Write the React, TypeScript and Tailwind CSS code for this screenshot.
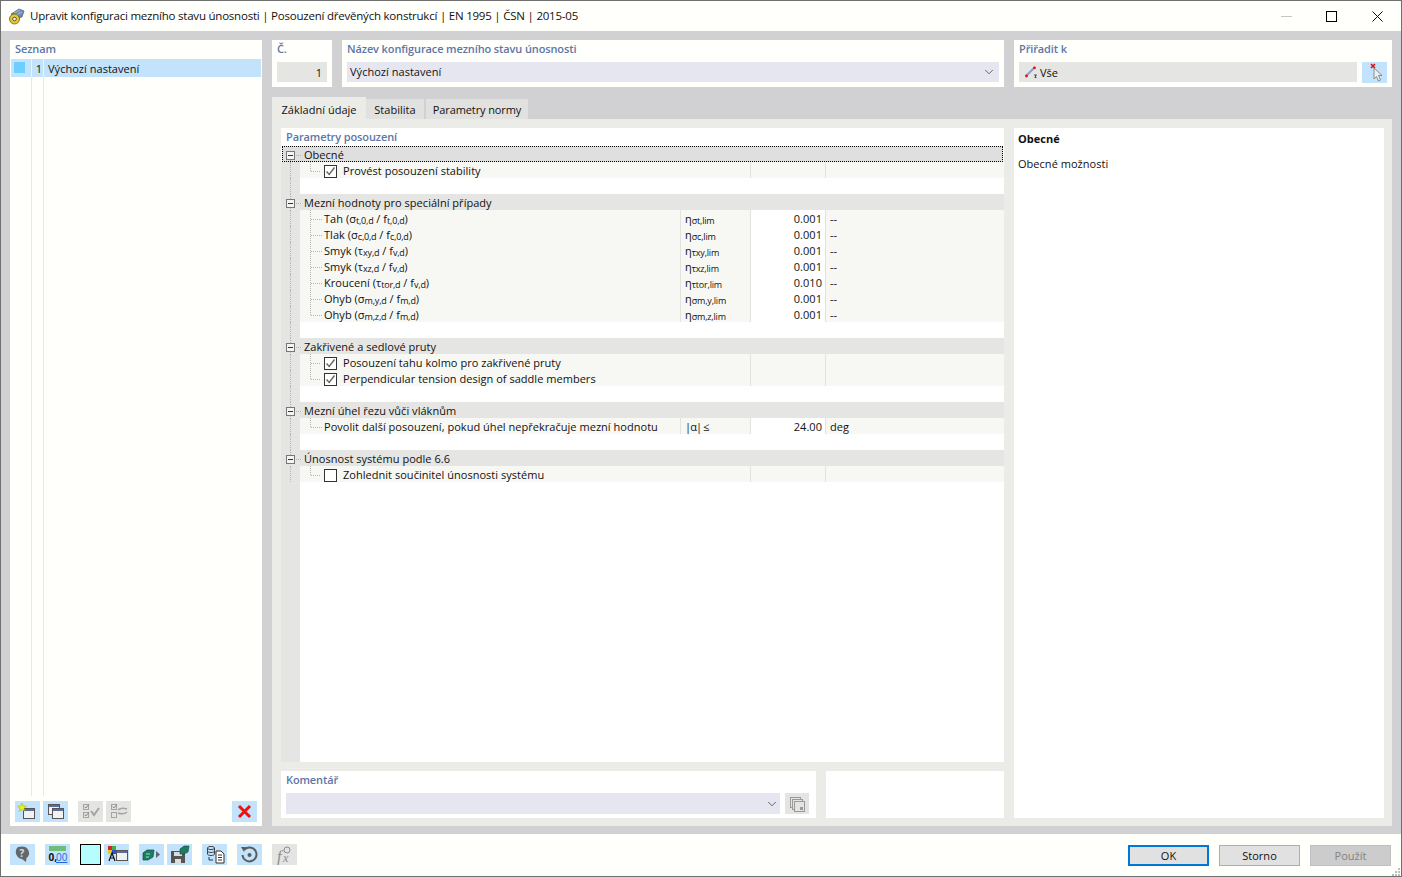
import type { ReactNode } from 'react';
import { ChevronDown } from 'lucide-react';

const ui = "font-['Open_Sans',sans-serif]";

function Sub({ children }: { children: ReactNode }) {
  return <sub className="text-[9px] tracking-[-0.2px] bottom-[-1px]">{children}</sub>;
}

function Formula({ name, a, b }: { name: string; a: ReactNode; b: string }) {
  return (
    <span>
      {name} ({a} / f<Sub>{b}</Sub>)
    </span>
  );
}

function Eta({ s }: { s: string }) {
  return (
    <span>
      η<Sub>{s}</Sub>
    </span>
  );
}

function Checkbox({ checked }: { checked: boolean }) {
  return (
    <span className="w-[13px] h-[13px] border border-[#333] bg-white flex items-center justify-center shrink-0">
      {checked && (
        <svg width="11" height="11" viewBox="0 0 11 11">
          <path d="M1.5 5.5 L4.2 8.5 L9.5 1.5" fill="none" stroke="#666" strokeWidth="1.4" />
        </svg>
      )}
    </span>
  );
}

function GutterLine({ show = true }: { show?: boolean }) {
  return (
    <div className="w-[19px] shrink-0 self-stretch bg-[#e5e5e3] pl-[9px]">
      {show && <div className="h-full border-l border-dotted border-[#b4b4b4]" />}
    </div>
  );
}

function Header({ title, focused, last }: { title: string; focused?: boolean; last?: boolean }) {
  return (
    <div
      className={
        'h-4 pt-[2px] flex items-center relative ' +
        (focused ? 'ml-px mr-px bg-[#dfdfdf] outline-1 outline-dotted outline-black -outline-offset-1' : 'bg-[#e5e5e3]')
      }
    >
      <svg width="23" height="16" viewBox="0 0 23 16" className={'shrink-0 overflow-visible ' + (focused ? '-ml-px' : '')}>
        <path d="M9.5 -1V4" stroke="#b4b4b4" strokeDasharray="1 1" opacity={focused ? 0 : 1} />
        <path d="M9.5 13V15" stroke="#b4b4b4" strokeDasharray="1 1" opacity={last ? 0 : 1} />
        <rect x="5.5" y="4.5" width="8" height="8" fill="#f4f4f2" stroke="#777" />
        <path d="M7 8.5H12" stroke="#333" />
        <path d="M15 8.5H21" stroke="#b4b4b4" strokeDasharray="1 1" />
      </svg>
      <span>{title}</span>
    </div>
  );
}

function Connector({ lastChild, lineWidth = 11 }: { lastChild?: boolean; lineWidth?: number }) {
  return (
    <svg width="23" height="16" viewBox="0 0 23 16" className="shrink-0 overflow-visible">
      <path d={lastChild ? 'M10.5 -1V8' : 'M10.5 -1V15'} stroke="#b4b4b4" strokeDasharray="1 1" />
      <path d={`M11 8.5H${11 + lineWidth}`} stroke="#b4b4b4" strokeDasharray="1 1" />
    </svg>
  );
}

function CheckRow({ label, checked, lastChild }: { label: string; checked: boolean; lastChild?: boolean }) {
  return (
    <div className="h-4 flex">
      <GutterLine />
      <div className="flex-1 flex bg-[#f7f8f3]">
        <div className="w-[450px] pt-[2px] flex items-center">
          <Connector lastChild={lastChild} lineWidth={10} />
          <span className="ml-[1px]">
            <Checkbox checked={checked} />
          </span>
          <span className="ml-[6px]">{label}</span>
        </div>
        <div className="w-[75px] border-l border-[#e2e2df]" />
        <div className="flex-1 border-l border-[#e2e2df]" />
      </div>
    </div>
  );
}

function ValueRow({
  label,
  symbol,
  value,
  unit,
  lastChild,
}: {
  label: ReactNode;
  symbol: ReactNode;
  value: string;
  unit: string;
  lastChild?: boolean;
}) {
  return (
    <div className="h-4 flex">
      <GutterLine />
      <div className="flex-1 flex bg-[#f7f8f3]">
        <div className="w-[380px] pt-[2px] flex items-center whitespace-nowrap">
          <Connector lastChild={lastChild} />
          <span className="ml-[1px]">{label}</span>
        </div>
        <div className="w-[70px] pt-[2px] border-l border-[#e2e2df] pl-[4px] flex items-center">{symbol}</div>
        <div className="w-[75px] pt-[2px] border-l border-[#e2e2df] bg-white pr-[3px] flex items-center justify-end">{value}</div>
        <div className="flex-1 pt-[2px] border-l border-[#e2e2df] pl-[4px] flex items-center">{unit}</div>
      </div>
    </div>
  );
}

function BlankRow({ line = true }: { line?: boolean }) {
  return (
    <div className="h-4 flex">
      <GutterLine show={line} />
      <div className="flex-1 bg-white" />
    </div>
  );
}

function Label({ children }: { children: ReactNode }) {
  return <div className="text-[#5d76a6] font-semibold leading-[18px] tracking-[-0.12px]">{children}</div>;
}

function IconButton({ children, disabled }: { children: ReactNode; disabled?: boolean }) {
  return (
    <button
      type="button"
      className={'w-[25px] h-[21px] flex items-center justify-center shrink-0 ' + (disabled ? 'bg-[#e4e4e2]' : 'bg-[#c2e3fb]')}
    >
      {children}
    </button>
  );
}

function Icon({ children }: { children: ReactNode }) {
  return (
    <svg width="25" height="21" viewBox="0 0 25 21">
      {children}
    </svg>
  );
}

function Win({ x, y }: { x: number; y: number }) {
  return (
    <g>
      <rect x={x + 0.5} y={y + 0.5} width="11" height="10" fill="#f2f2f2" stroke="#555" />
      <rect x={x + 1} y={y + 1} width="10" height="2" fill="#5a6f9f" />
    </g>
  );
}

function DialogButton({ children, variant }: { children: string; variant: 'ok' | 'plain' | 'off' }) {
  const cls =
    variant === 'ok'
      ? 'border-2 border-[#0078d7] bg-[#e1e1e1]'
      : variant === 'plain'
        ? 'border border-[#adadad] bg-[#e1e1e1]'
        : 'border border-[#bfbfbf] bg-[#cccccc] text-[#838383]';
  return (
    <button type="button" className={'w-[81px] h-[21px] pt-px flex items-center justify-center ' + cls}>
      {children}
    </button>
  );
}

export default function App() {
  return (
    <div className={'w-[1402px] h-[877px] flex flex-col border border-[#6f6f6f] bg-[#fffffc] text-[11px] text-[#111] tracking-[0.03px] overflow-hidden ' + ui}>
      <div className="h-[30px] shrink-0 flex items-center pl-[7px]">
        <svg width="17" height="17" viewBox="0 0 17 17" className="shrink-0">
          <path d="M3 6 L11 1 L16 3 L14 9 L8 11 Z" fill="#6f8db5" stroke="#3a4a5e" strokeWidth="0.6" />
          <path d="M6 5 L12 2 M8 7 L14 4" stroke="#c9d6e6" strokeWidth="0.7" />
          <circle cx="6.5" cy="11" r="5" fill="#e6c830" stroke="#6b5a10" strokeWidth="0.8" />
          <circle cx="6.5" cy="11" r="1.8" fill="#fff" stroke="#333" strokeWidth="0.8" />
        </svg>
        <span className="ml-[5px] text-[11.5px] tracking-[-0.22px]">
          Upravit konfiguraci mezního stavu únosnosti | Posouzení dřevěných konstrukcí | EN 1995 | ČSN | 2015-05
        </span>
        <div className="ml-auto flex items-center pr-[18px]">
          <div className="w-[11px] h-px bg-[#c4c4c4]" />
          <div className="ml-[34px] w-[11px] h-[11px] border border-black" />
          <svg width="11" height="11" viewBox="0 0 11 11" className="ml-[35px]">
            <path d="M0.5 0.5L10.5 10.5M10.5 0.5L0.5 10.5" stroke="#111" />
          </svg>
        </div>
      </div>

      <div className="flex-1 min-h-0 bg-[#d1d1d4] flex gap-[10px] pl-[9px] pr-[9px] pt-[9px] pb-[8px]">
        <div className="w-[252px] shrink-0 bg-[#fffffc] flex flex-col px-px pb-px">
          <div className="pl-[4px] h-[19px]">
            <Label>Seznam</Label>
          </div>
          <div className="h-[18px] bg-[#c2e3fb] flex items-center">
            <div className="w-[21px] h-full border-r border-[#eef3f5] pl-[3px] flex items-start pt-[3px]">
              <div className="w-[11px] h-[11px] bg-[#6dcfff]" />
            </div>
            <div className="w-[12px] h-full pt-[2px] border-r border-[#eef3f5] flex items-center justify-end pr-[1px]">1</div>
            <span className="pl-[4px] pt-[2px]">Výchozí nastavení</span>
          </div>
          <div className="flex-1 flex min-h-0">
            <div className="w-[21px] border-r border-[#e8e8e6]" />
            <div className="w-[12px] border-r border-[#e8e8e6]" />
          </div>
          <div className="h-[29px] flex items-start pl-[4px] pt-[5px] gap-[3px] bg-[#fffffc]">
            <IconButton>
              <Icon>
                <Win x={8} y={7} />
                <path d="M7 2 L8.2 5 L11.5 5.2 L9 7.2 L9.8 10.3 L7 8.6 L4.2 10.3 L5 7.2 L2.5 5.2 L5.8 5 Z" fill="#e8f020" stroke="#8a9a10" strokeWidth="0.4" />
              </Icon>
            </IconButton>
            <IconButton>
              <Icon>
                <Win x={5} y={3} />
                <Win x={9} y={7} />
              </Icon>
            </IconButton>
            <div className="ml-[7px] flex gap-[3px]">
              <IconButton disabled>
                <Icon>
                  <rect x="5.5" y="3.5" width="5" height="5" fill="none" stroke="#a4a4a4" />
                  <rect x="5.5" y="11.5" width="5" height="5" fill="none" stroke="#a4a4a4" />
                  <path d="M6.5 5.5l1.5 1.5 3-4M6.5 13.5l1.5 1.5 3-4" fill="none" stroke="#8c8c8c" />
                  <path d="M13 10l3 4 5-7" fill="none" stroke="#a4a4a4" strokeWidth="2" />
                </Icon>
              </IconButton>
              <IconButton disabled>
                <Icon>
                  <rect x="5.5" y="3.5" width="5" height="5" fill="none" stroke="#a4a4a4" />
                  <rect x="5.5" y="11.5" width="5" height="5" fill="none" stroke="#a4a4a4" />
                  <path d="M6.5 5.5l1.5 1.5 3-4" fill="none" stroke="#8c8c8c" />
                  <path d="M12 9c3-3 6-2 9-1M12 12c3 1 6 2 9-1" fill="none" stroke="#a4a4a4" strokeWidth="1.4" />
                </Icon>
              </IconButton>
            </div>
            <div className="ml-auto mr-[4px]">
              <IconButton>
                <Icon>
                  <path d="M7 5L18 16M18 5L7 16" stroke="#f01010" strokeWidth="3" />
                </Icon>
              </IconButton>
            </div>
          </div>
        </div>

        <div className="flex-1 min-w-0 flex flex-col">
          <div className="h-[47px] shrink-0 flex gap-[10px]">
            <div className="w-[60px] bg-[#fffffc] px-[5px]">
              <Label>Č.</Label>
              <div className="mt-[4px] h-[20px] pt-[2px] bg-[#e5e5e3] flex items-center justify-end pr-[5px]">1</div>
            </div>
            <div className="w-[662px] bg-[#fffffc] px-[5px]">
              <Label>Název konfigurace mezního stavu únosnosti</Label>
              <div className="mt-[4px] h-[20px] bg-[#e6e6f1] flex items-center justify-between pl-[3px] pr-[3px]">
                <span>Výchozí nastavení</span>
                <ChevronDown size={14} strokeWidth={1.25} className="text-[#333]" />
              </div>
            </div>
            <div className="flex-1 bg-[#fffffc] px-[5px]">
              <Label>Přiřadit k</Label>
              <div className="mt-[4px] flex gap-[5px]">
                <div className="flex-1 h-[20px] bg-[#e5e5e3] flex items-center pl-[6px] gap-[3px]">
                  <svg width="12" height="12" viewBox="0 0 12 12" className="shrink-0">
                    <path d="M1.5 9.5L9 2" stroke="#8aa0c8" strokeWidth="2" />
                    <circle cx="1.5" cy="10" r="1.4" fill="#e01010" />
                    <circle cx="9.5" cy="1.8" r="1.4" fill="#e01010" />
                    <path d="M9 9h3M10.5 9v3M9 12h3" stroke="#333" strokeWidth="0.8" />
                  </svg>
                  <span className="pt-[2px]">Vše</span>
                </div>
                <IconButton>
                  <svg width="25" height="21" viewBox="0 0 25 21">
                    <path d="M9 2L13 6M13 2L9 6" stroke="#e01010" strokeWidth="1.6" />
                    <path d="M12 6V17L14.5 14.5L16.5 19L18.5 18L16.5 13.5H20Z" fill="#efefef" stroke="#777" strokeWidth="0.8" />
                  </svg>
                </IconButton>
              </div>
            </div>
          </div>

          <div className="mt-[10px] h-[22px] shrink-0 flex items-end">
            <div className="w-[94px] h-[22px] pt-[4px] bg-[#ebebe8] flex items-center justify-center">Základní údaje</div>
            <div className="w-[58px] h-[20px] pt-[2px] bg-[#e1e1e0] flex items-center justify-center">Stabilita</div>
            <div className="w-[102px] h-[20px] pt-[2px] ml-[2px] bg-[#e1e1e0] flex items-center justify-center tracking-[-0.1px]">Parametry normy</div>
          </div>

          <div className="flex-1 min-h-0 bg-[#ebebe8] flex gap-[10px] pl-[9px] pr-[8px] pt-[9px] pb-[8px]">
            <div className="w-[723px] shrink-0 flex flex-col gap-[9px]">
              <div className="flex-1 min-h-0 bg-white flex flex-col">
                <div className="h-[18px] shrink-0 pl-[5px]">
                  <Label>Parametry posouzení</Label>
                </div>
                <Header title="Obecné" focused />
                <CheckRow label="Provést posouzení stability" checked lastChild />
                <BlankRow />
                <Header title="Mezní hodnoty pro speciální případy" />
                <ValueRow label={<Formula name="Tah" a={<>σ<Sub>t,0,d</Sub></>} b="t,0,d" />} symbol={<Eta s="σt,lim" />} value="0.001" unit="--" />
                <ValueRow label={<Formula name="Tlak" a={<>σ<Sub>c,0,d</Sub></>} b="c,0,d" />} symbol={<Eta s="σc,lim" />} value="0.001" unit="--" />
                <ValueRow label={<Formula name="Smyk" a={<>τ<Sub>xy,d</Sub></>} b="v,d" />} symbol={<Eta s="τxy,lim" />} value="0.001" unit="--" />
                <ValueRow label={<Formula name="Smyk" a={<>τ<Sub>xz,d</Sub></>} b="v,d" />} symbol={<Eta s="τxz,lim" />} value="0.001" unit="--" />
                <ValueRow label={<Formula name="Kroucení" a={<>τ<Sub>tor,d</Sub></>} b="v,d" />} symbol={<Eta s="τtor,lim" />} value="0.010" unit="--" />
                <ValueRow label={<Formula name="Ohyb" a={<>σ<Sub>m,y,d</Sub></>} b="m,d" />} symbol={<Eta s="σm,y,lim" />} value="0.001" unit="--" />
                <ValueRow label={<Formula name="Ohyb" a={<>σ<Sub>m,z,d</Sub></>} b="m,d" />} symbol={<Eta s="σm,z,lim" />} value="0.001" unit="--" lastChild />
                <BlankRow />
                <Header title="Zakřivené a sedlové pruty" />
                <CheckRow label="Posouzení tahu kolmo pro zakřivené pruty" checked />
                <CheckRow label="Perpendicular tension design of saddle members" checked lastChild />
                <BlankRow />
                <Header title="Mezní úhel řezu vůči vláknům" />
                <ValueRow
                  label="Povolit další posouzení, pokud úhel nepřekračuje mezní hodnotu"
                  symbol={<span className="tracking-[-0.9px]">|α| ≤</span>}
                  value="24.00"
                  unit="deg"
                  lastChild
                />
                <BlankRow />
                <Header title="Únosnost systému podle 6.6" last />
                <CheckRow label="Zohlednit součinitel únosnosti systému" checked={false} lastChild />
                <div className="flex-1 min-h-0 flex">
                  <GutterLine show={false} />
                </div>
              </div>

              <div className="h-[47px] shrink-0 flex gap-[10px]">
                <div className="w-[535px] bg-white px-[5px]">
                  <Label>Komentář</Label>
                  <div className="mt-[4px] flex gap-[5px]">
                    <div className="w-[494px] h-[21px] bg-[#e6e6f1] flex items-center justify-end pr-[1px]">
                      <ChevronDown size={14} strokeWidth={1.25} className="text-[#333]" />
                    </div>
                    <div className="w-[24px] h-[21px] bg-[#e4e4e2] flex items-center justify-center">
                      <svg width="16" height="16" viewBox="0 0 16 16">
                        <rect x="1.5" y="1.5" width="10" height="10" fill="none" stroke="#9a9a9a" />
                        <rect x="3.5" y="3.5" width="10" height="10" fill="#e4e4e2" stroke="#9a9a9a" />
                        <rect x="5.5" y="5.5" width="10" height="10" fill="#e4e4e2" stroke="#9a9a9a" />
                        <rect x="11" y="11" width="3" height="3" fill="#9a9a9a" />
                      </svg>
                    </div>
                  </div>
                </div>
                <div className="flex-1 bg-white" />
              </div>
            </div>

            <div className="flex-1 bg-white pl-[4px] pt-[2px]">
              <div className="font-bold leading-[18px]">Obecné</div>
              <div className="mt-[7px] leading-[18px]">Obecné možnosti</div>
            </div>
          </div>
        </div>
      </div>

      <div className="h-[42px] shrink-0 flex items-start pt-[10px] pl-[9px] pr-[10px] relative">
        <IconButton>
          <Icon>
            <path d="M12.5 3a7 6.5 0 0 1 4.5 11.5l-.5 4-4-3a7 7 0 0 1-4-12z" fill="#666" transform="translate(-0.5,-0.5)" />
            <text x="12" y="13" textAnchor="middle" fontSize="10" fontWeight="700" fill="#c2e3fb">?</text>
          </Icon>
        </IconButton>
        <div className="ml-[10px]">
          <IconButton>
            <Icon>
              <rect x="4" y="2" width="17" height="5" fill="#6ebd78" />
              <text x="3.5" y="17" fontSize="10" fontWeight="700" fill="#111">0,</text>
              <text x="11" y="17" fontSize="10" fill="#2266dd" textDecoration="underline">00</text>
            </Icon>
          </IconButton>
        </div>
        <div className="ml-[10px] w-[21px] h-[21px] border border-black bg-[#b5fdfe]" />
        <div className="ml-[3px]">
          <IconButton>
            <Icon>
              <rect x="4" y="2" width="4" height="4" fill="#e02020" />
              <rect x="8" y="2" width="4" height="4" fill="#40b040" />
              <rect x="4" y="6" width="4" height="4" fill="#e0d020" />
              <rect x="8" y="6" width="4" height="4" fill="#3050d0" />
              <Win x={12} y={6} />
              <path d="M5 17L8 9L11 17M6 14H10" fill="none" stroke="#111" strokeWidth="1.2" />
            </Icon>
          </IconButton>
        </div>
        <div className="ml-[10px]">
          <IconButton>
            <Icon>
              <path d="M4 9L8 6H15L14 13L9 16H4Z" fill="#1d7d62" stroke="#0d4a3a" strokeWidth="0.7" />
              <path d="M7 10h4M7 13h3" stroke="#9be0c8" />
              <path d="M17 7L21 10.5L17 14Z" fill="#666" />
            </Icon>
          </IconButton>
        </div>
        <div className="ml-[3px]">
          <IconButton>
            <Icon>
              <path d="M4 7H16L18 9V19H4Z" fill="#555" />
              <rect x="7" y="8" width="8" height="4" fill="#ddd" />
              <rect x="8" y="15" width="6" height="4" fill="#ddd" />
              <path d="M13 5L17 2H22L21 8L17 10H13Z" fill="#1d7d62" stroke="#0d4a3a" strokeWidth="0.6" />
            </Icon>
          </IconButton>
        </div>
        <div className="ml-[10px]">
          <IconButton>
            <Icon>
              <ellipse cx="9" cy="4" rx="3.5" ry="1.6" fill="none" stroke="#444" />
              <path d="M5.5 4V10c0 2 7 2 7 0V4M5.5 7c0 2 7 2 7 0" fill="none" stroke="#444" />
              <path d="M7 13v3h4" fill="none" stroke="#333" />
              <path d="M14 7H19L22 10V19H14Z" fill="#fff" stroke="#333" />
              <path d="M16 11H20M16 13.5H20M16 16H20" stroke="#333" />
            </Icon>
          </IconButton>
        </div>
        <div className="ml-[10px]">
          <IconButton>
            <Icon>
              <path d="M7.5 5.5A7 7 0 1 1 5.5 11" fill="none" stroke="#5c5c5c" strokeWidth="2" />
              <path d="M4 3L9 3L7 8Z" fill="#5c5c5c" />
              <circle cx="12.5" cy="11" r="2" fill="#5c5c5c" />
            </Icon>
          </IconButton>
        </div>
        <div className="ml-[10px]">
          <IconButton disabled>
            <Icon>
              <text x="5" y="18" fontSize="16" fontStyle="italic" fontFamily="Liberation Serif" fill="#8c8c8c">f</text>
              <text x="11" y="18" fontSize="12" fontStyle="italic" fontFamily="Liberation Serif" fill="#8c8c8c">x</text>
              <circle cx="15" cy="6" r="3" fill="none" stroke="#8c8c8c" />
            </Icon>
          </IconButton>
        </div>
        <div className="ml-auto flex gap-[10px] mt-px">
          <DialogButton variant="ok">OK</DialogButton>
          <DialogButton variant="plain">Storno</DialogButton>
          <DialogButton variant="off">Použít</DialogButton>
        </div>
        <svg width="10" height="10" viewBox="0 0 10 10" className="absolute right-0 bottom-0">
          <path d="M7 2h2v2H7zM4 5h2v2H4zM7 5h2v2H7zM1 8h2v2H1zM4 8h2v2H4zM7 8h2v2H7z" fill="#bdbdbd" />
        </svg>
      </div>
    </div>
  );
}
